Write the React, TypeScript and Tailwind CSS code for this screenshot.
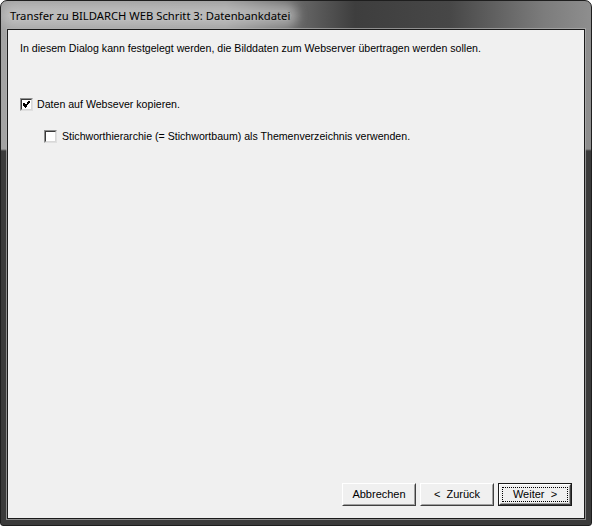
import React from "react";

function CheckBox({ checked }: { checked?: boolean }) {
  return (
    <span className="w-[13px] h-[13px] shrink-0 border border-t-[#8e8f8f] border-l-[#8e8f8f] border-r-[#e0e0e0] border-b-[#e0e0e0] bg-white flex">
      <span className="flex-1 border border-t-[#3a3a3a] border-l-[#3a3a3a] border-r-[#d8d8d8] border-b-[#d8d8d8] bg-white flex items-center justify-center">
        {checked && (
          <svg width="7" height="7" viewBox="0 0 7 7" shapeRendering="crispEdges">
            <path d="M0 2h1v1H0zM0 3h2v1H0zM0 4h3v1H0zM1 5h3v1H1zM2 6h1v1H2zM3 4h1v1H3zM3 3h2v1H3zM4 2h2v1H4zM5 1h1v1H5zM6 0h1v1H6zM5 0h1v1H5zM6 1h1v1H6zM1 2h1v1H1zM2 3h1v1H2zM4 1h1v1H4z" fill="#000" />
          </svg>
        )}
      </span>
    </span>
  );
}

function Button({ label, primary }: { label: string; primary?: boolean }) {
  return (
    <div
      className={
        "w-[74px] h-[23px] flex " +
        (primary ? "border border-[#1a1a1a]" : "")
      }
    >
      <div className="flex-1 flex border border-t-white border-l-white border-r-[#404040] border-b-[#404040] bg-[#f0f0f0]">
        <div className="flex-1 flex border border-t-[#f0f0f0] border-l-[#f0f0f0] border-r-[#a0a0a0] border-b-[#a0a0a0]">
          <div
            className={
              "flex-1 flex items-center justify-center text-[11px] text-black whitespace-pre " +
              (primary ? "m-[1px] border border-dotted border-black" : "")
            }
          >
            {label}
          </div>
        </div>
      </div>
    </div>
  );
}

export default function App() {
  return (
    <div className="w-[592px] h-[526px] overflow-hidden rounded-t-[7px] rounded-b-[3px] border border-[#1e1e1e] flex flex-col bg-[linear-gradient(to_bottom,transparent_0,transparent_148px,#3b3b3b_150px),linear-gradient(to_right,#a3a3a3_0%,#9d9d9d_38%,#3e3e3e_60%,#474747_76%,#7c7c7c_92%,#8e8e8e_100%)] font-['Liberation_Sans',Arial,sans-serif]">
      {/* Title bar */}
      <div className="h-[27px] shrink-0 flex items-center pl-[7px] pt-[2px]">
        <span className="px-[2px] rounded-[6px] bg-[#d6d6d6]/50 shadow-[0_0_10px_6px_rgba(214,214,214,0.5)] text-[11.25px] text-black font-['Noto_Sans',sans-serif] leading-none">
          Transfer zu BILDARCH WEB Schritt 3: Datenbankdatei
        </span>
      </div>

      {/* Client frame */}
      <div className="flex-1 mx-[5px] mb-[5px] flex border border-[#b0b0b0]/70">
        <div className="flex-1 flex border border-[#1a1a1a]">
          <div className="flex-1 bg-[#f0f0f0] flex flex-col text-[10.6px] text-black">
            <p className="pl-[12px] pt-[12px] leading-[13px]">
              In diesem Dialog kann festgelegt werden, die Bilddaten zum Webserver übertragen werden sollen.
            </p>

            <div className="mt-[43px] pl-[12px] flex items-center gap-[4px] leading-[13px]">
              <CheckBox checked />
              <span>Daten auf Websever kopieren.</span>
            </div>

            <div className="mt-[19px] pl-[36px] flex items-center gap-[5px] leading-[13px]">
              <CheckBox />
              <span>Stichworthierarchie (= Stichwortbaum) als Themenverzeichnis verwenden.</span>
            </div>

            <div className="mt-auto mb-[12px] mr-[12px] flex justify-end gap-[4px]">
              <Button label="Abbrechen" />
              <Button label="<  Zurück" />
              <Button label="Weiter  >" primary />
            </div>
          </div>
        </div>
      </div>
    </div>
  );
}
